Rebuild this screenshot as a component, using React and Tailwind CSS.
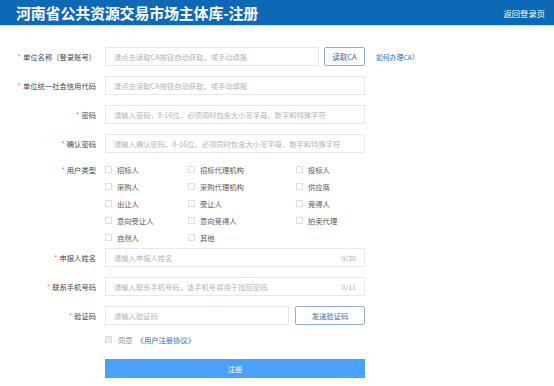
import React from "react";

const font = { fontFamily: '"Noto Sans CJK SC", "Noto Sans", sans-serif' };

function Label({ children }) {
  return (
    <div className="w-[96px] shrink-0 text-right text-[7.3px] text-[#444] leading-[10px] whitespace-nowrap">
      <span className="text-[#f56c6c] mr-[2px]">*</span>
      {children}
    </div>
  );
}

function Input({ placeholder, counter, className = "w-[260px]" }) {
  return (
    <div className={`h-[19px] border border-[#e6e8ec] bg-white flex items-center px-[8px] ${className}`}>
      <span className="text-[7.3px] text-[#b3b3b3] leading-[10px] whitespace-nowrap flex-1">{placeholder}</span>
      {counter && <span className="text-[7px] text-[#aaa] leading-[10px] ml-1">{counter}</span>}
    </div>
  );
}

function Check({ label }) {
  return (
    <div className="flex items-center h-[17px]">
      <div className="w-[7px] h-[7px] border border-[#dcdfe6] bg-white" />
      <span className="ml-[5px] text-[7.3px] text-[#555] leading-[10px] whitespace-nowrap">{label}</span>
    </div>
  );
}

export default function App() {
  const types = [
    "招标人", "招标代理机构", "投标人",
    "采购人", "采购代理机构", "供应商",
    "出让人", "受让人", "竞得人",
    "意向受让人", "意向竞得人", "拍卖代理",
    "自然人", "其他",
  ];
  return (
    <div className="w-[554px] h-[386px] bg-white overflow-hidden" style={font}>
      <div className="h-[25px] bg-[#0d68b5] flex items-center justify-between pl-[16px] pr-[9px]">
        <span className="text-white font-bold text-[15px] leading-[18px] tracking-[-0.2px]">河南省公共资源交易市场主体库-注册</span>
        <span className="text-white text-[8.3px] leading-[10px]">返回登录页</span>
      </div>
      <div className="h-[1px] bg-[#d4e2ef]" />

      <div className="pt-[21px] flex flex-col">
        <div className="flex items-center h-[19px]">
          <Label>单位名称（登录账号）</Label>
          <div className="ml-[9px] flex items-center">
            <Input placeholder="请点击读取CA按钮自动获取，或手动填报" className="w-[214px]" />
            <div className="ml-[5px] w-[41px] h-[19px] border border-[#8db0d2] rounded-[2px] flex items-center justify-center text-[7.5px] text-[#2f64a0] leading-[10px]">读取CA</div>
            <span className="ml-[11px] text-[6.8px] text-[#2a6ab3] leading-[10px] whitespace-nowrap">如何办理CA?</span>
          </div>
        </div>

        <div className="flex items-center h-[19px] mt-[10px]">
          <Label>单位统一社会信用代码</Label>
          <div className="ml-[9px]"><Input placeholder="请点击读取CA按钮自动获取，或手动填报" /></div>
        </div>

        <div className="flex items-center h-[19px] mt-[10px]">
          <Label>密码</Label>
          <div className="ml-[9px]"><Input placeholder="请输入密码，8-16位，必须同时包含大小写字母、数字和特殊字符" /></div>
        </div>

        <div className="flex items-center h-[19px] mt-[10px]">
          <Label>确认密码</Label>
          <div className="ml-[9px]"><Input placeholder="请输入确认密码，8-16位，必须同时包含大小写字母、数字和特殊字符" /></div>
        </div>

        <div className="flex items-start mt-[8px]">
          <div className="h-[17px] flex items-center"><Label>用户类型</Label></div>
          <div className="ml-[9px] grid grid-cols-[83px_108px_80px]">
            {types.map((t) => (
              <Check key={t} label={t} />
            ))}
          </div>
        </div>

        <div className="flex items-center h-[19px] mt-[2px]">
          <Label>申报人姓名</Label>
          <div className="ml-[9px]"><Input placeholder="请输入申报人姓名" counter="0/20" /></div>
        </div>

        <div className="flex items-center h-[19px] mt-[10px]">
          <Label>联系手机号码</Label>
          <div className="ml-[9px]"><Input placeholder="请输入联系手机号码，该手机号将用于找回密码" counter="0/11" /></div>
        </div>

        <div className="flex items-center h-[19px] mt-[10px]">
          <Label>验证码</Label>
          <div className="ml-[9px] flex items-center">
            <Input placeholder="请输入验证码" className="w-[184px]" />
            <div className="ml-[6px] w-[70px] h-[19px] border border-[#8db0d2] rounded-[2px] flex items-center justify-center text-[7.3px] text-[#3a6aa3] leading-[10px]">发送验证码</div>
          </div>
        </div>

        <div className="flex items-center h-[17px] mt-[6px] pl-[105px]">
          <div className="w-[7px] h-[7px] border border-[#d5dff0] bg-[#e9eff9]" />
          <span className="ml-[6px] text-[7.3px] text-[#888] leading-[10px]">同意</span>
          <span className="ml-[4px] text-[7.3px] text-[#2a6ab3] leading-[10px]">《用户注册协议》</span>
        </div>

        <div className="pl-[105px] mt-[11px]">
          <div className="w-[260px] h-[19px] bg-[#4aa1f7] flex items-center justify-center text-white text-[7.3px] leading-[10px]">注册</div>
        </div>
      </div>
    </div>
  );
}
